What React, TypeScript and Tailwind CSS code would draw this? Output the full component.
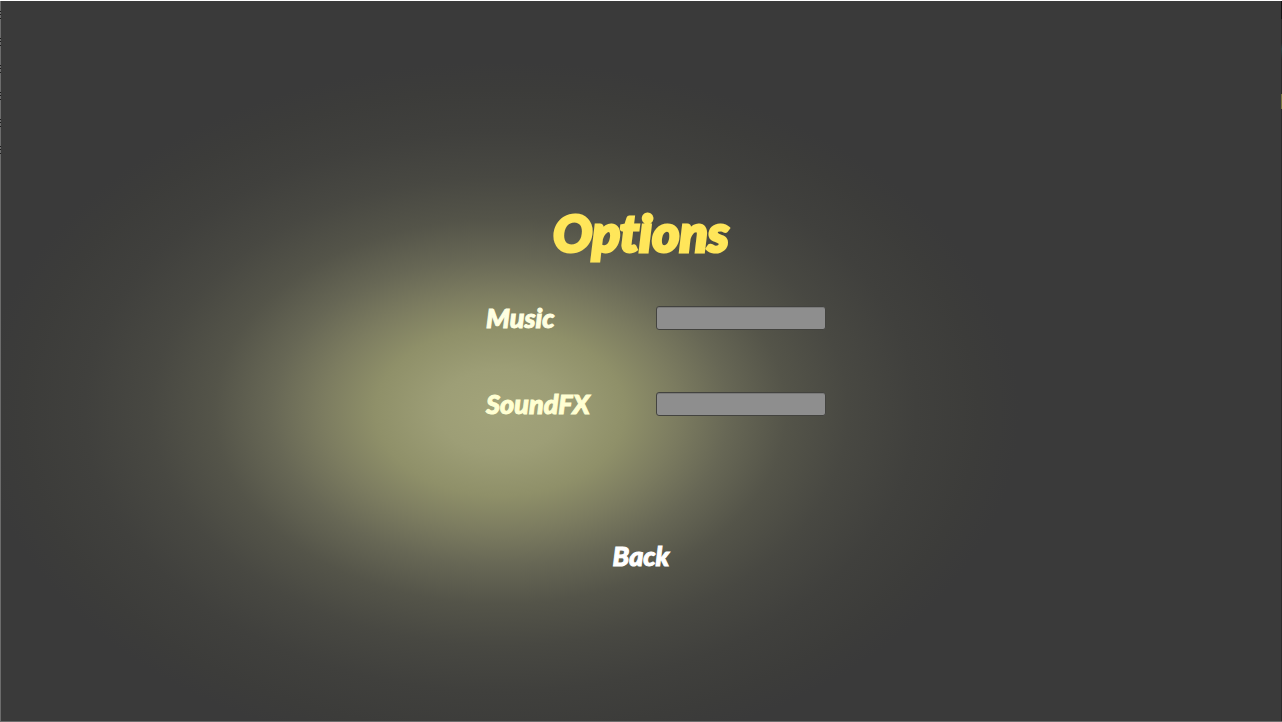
import { useState } from "react";

type VolumeRowProps = {
  id: string;
  label: string;
  color: string;
};

function VolumeRow({ id, label, color }: VolumeRowProps) {
  const [volume, setVolume] = useState(0);
  return (
    <div className="flex h-6 items-center justify-between">
      <label htmlFor={id} className={`text-[27px] leading-6 [-webkit-text-stroke:1px_currentColor] ${color}`}>
        {label}
      </label>
      <input
        id={id}
        type="range"
        min={0}
        max={100}
        value={volume}
        onChange={(e) => setVolume(Number(e.target.value))}
        className="h-6 w-[170px] cursor-pointer appearance-none rounded-[3px] border border-[#43433f] bg-[#8e8e8e] shadow-[inset_0_1px_0_#7a7a7a] [&::-webkit-slider-thumb]:appearance-none [&::-webkit-slider-thumb]:opacity-0"
      />
    </div>
  );
}

export default function App() {
  return (
    <div className="flex min-h-screen flex-col border-t border-b border-t-white border-b-[#6c6c6c] bg-[#3a3a3a] font-['Lato',sans-serif] font-black italic [font-variant-ligatures:none]">
      <div className="flex grow">
        <div className="w-px bg-[#6c6c6c]">
          <div className="h-[156px] bg-[repeating-linear-gradient(to_bottom,transparent_0_10px,#1c1c1c_10px_11px,transparent_11px_13px,#1c1c1c_13px_14px,transparent_14px_17px,#1c1c1c_17px_18px,transparent_18px_27px)]" />
        </div>
        <main className="flex grow flex-col items-center bg-[radial-gradient(ellipse_520px_350px_at_39%_57%,#a3a47a_0%,#9d9e76_12%,#8f9069_24%,#7c7c60_34%,#676755_44%,#545449_55%,#484842_67%,#40403d_80%,#3c3c3a_92%,#3a3a3a_100%)] pt-[201px]">
          <h1 className="text-[52px] leading-[60px] text-[#ffe65a] [-webkit-text-stroke:3px_currentColor]">Options</h1>
          <div className="mt-11 flex w-[370px] flex-col gap-[62px] pl-[30px]">
            <VolumeRow id="music" label="Music" color="text-[#ffffe1]" />
            <VolumeRow id="soundfx" label="SoundFX" color="text-[#ffffd2]" />
          </div>
          <button
            type="button"
            className="mt-[124px] cursor-pointer text-[27px] leading-8 text-white [-webkit-text-stroke:1px_currentColor]"
          >
            Back
          </button>
        </main>
        <div className="w-px bg-[#2a2a2a]">
          <div className="h-[120px] bg-[linear-gradient(to_bottom,#151515_0_18px,#2a2a2a_18px_42px,#2c4444_48px,#2a2a2a_58px_93px,#77753f_93px_108px,#2a2a2a_108px)]" />
        </div>
      </div>
    </div>
  );
}
